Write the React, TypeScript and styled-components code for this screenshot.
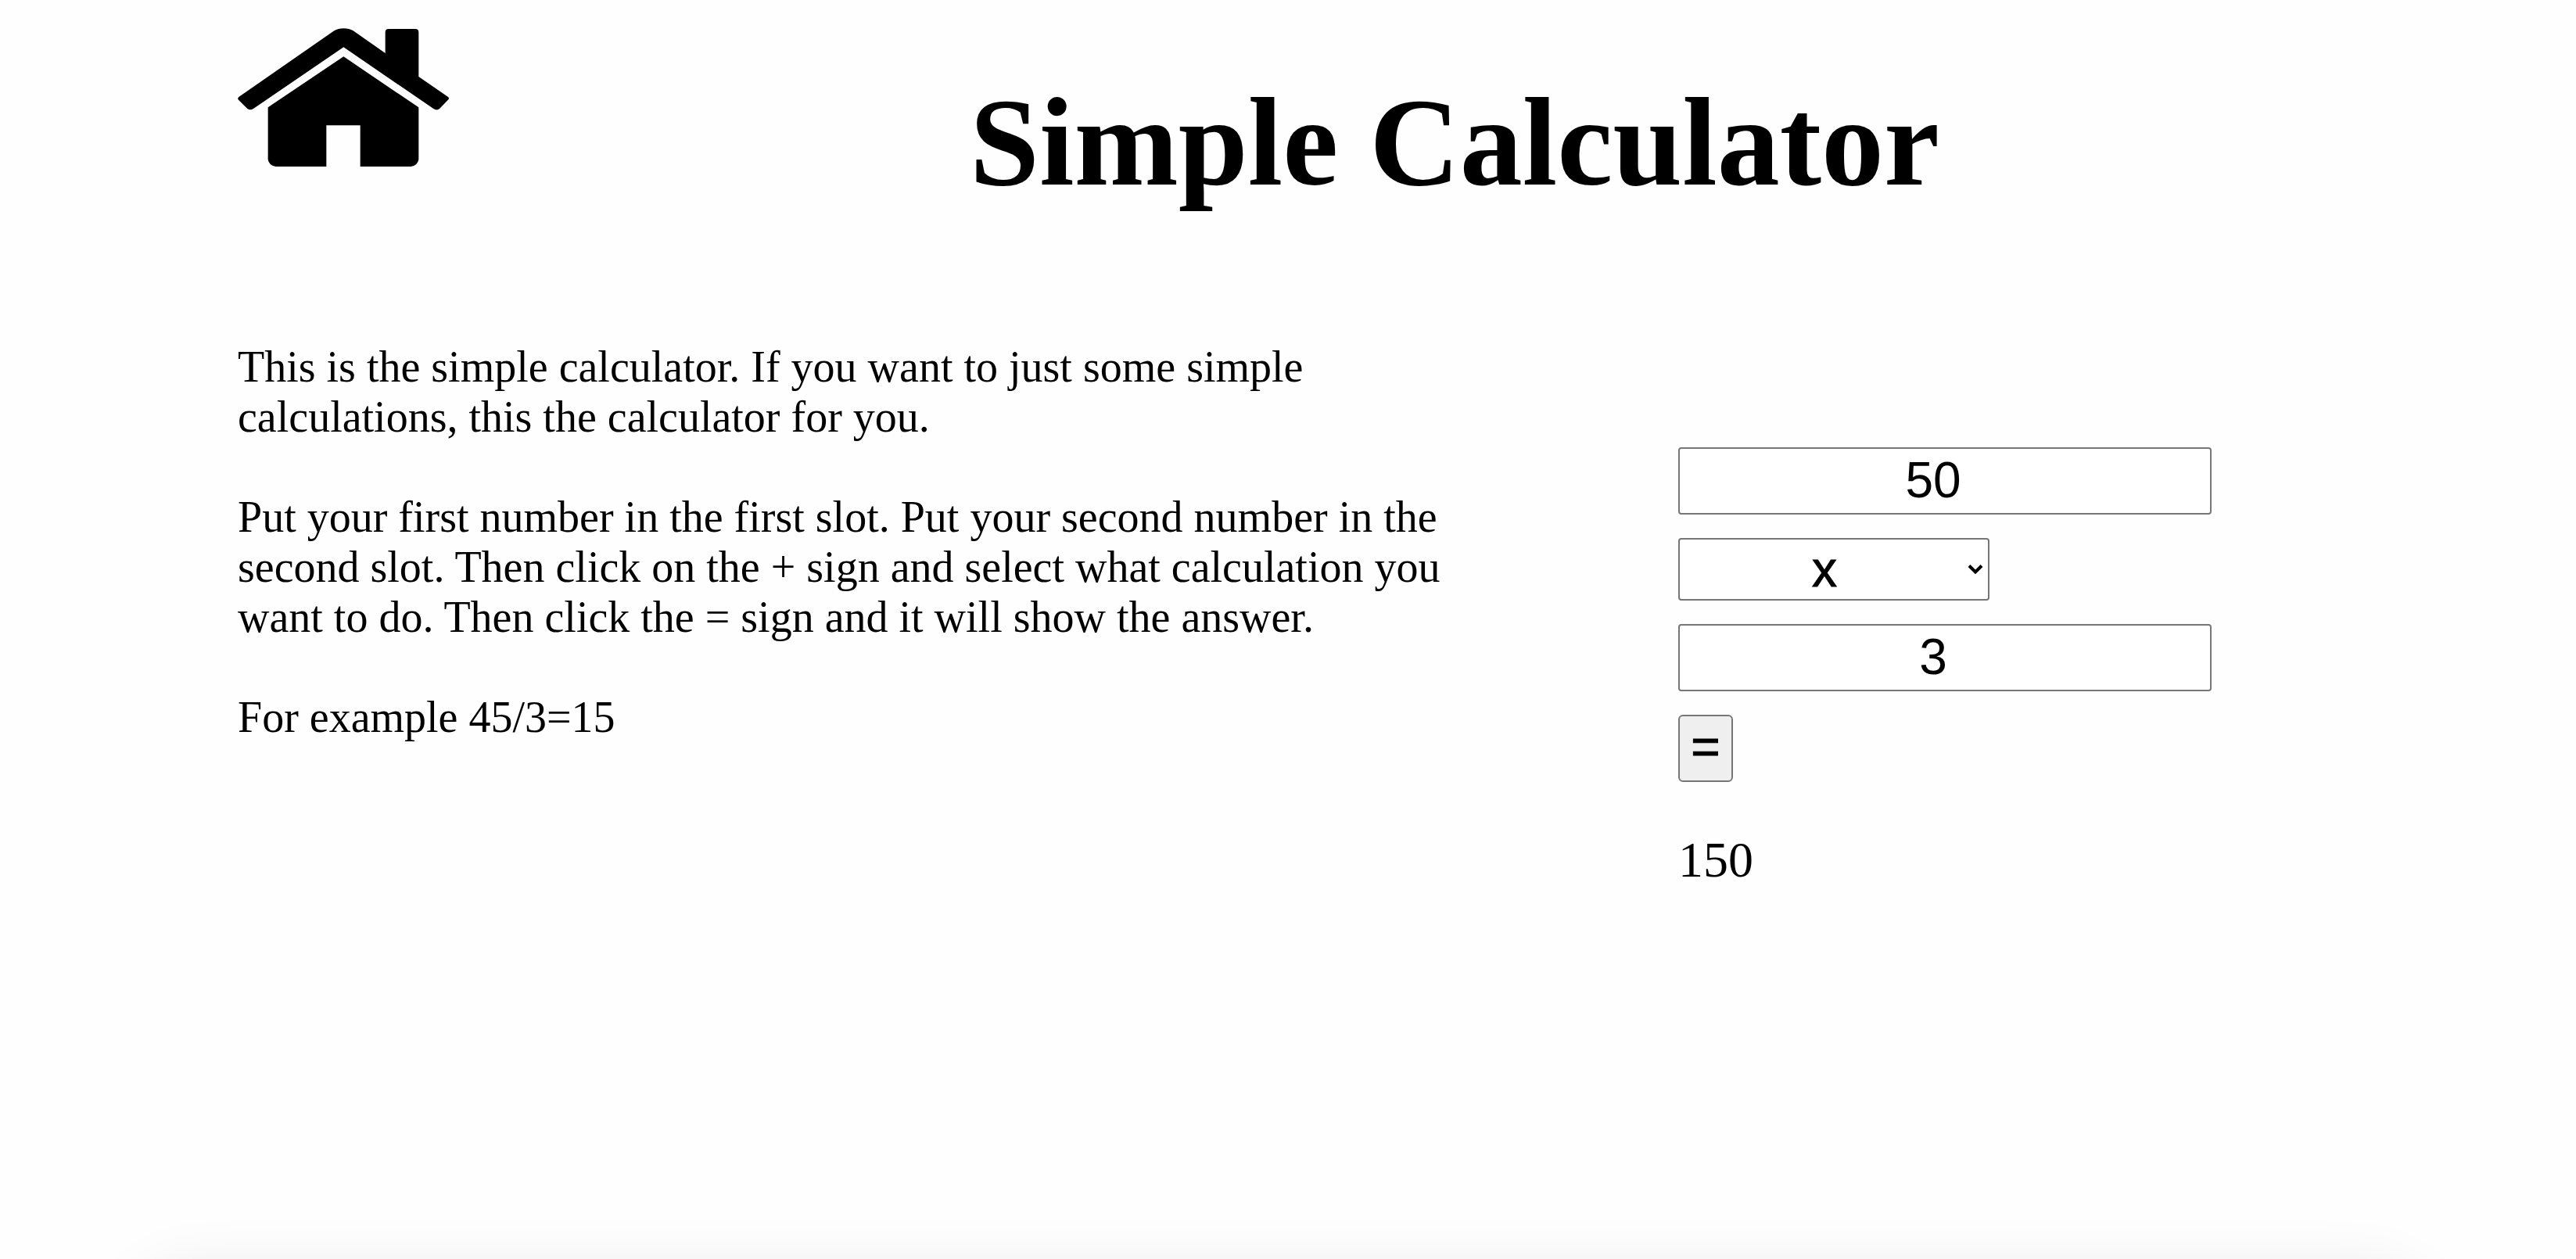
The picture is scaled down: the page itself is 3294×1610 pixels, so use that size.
import React, { useState } from "react";
import styled, { createGlobalStyle } from "styled-components";

const GlobalStyle = createGlobalStyle`
  *, *::before, *::after { box-sizing: border-box; }
  body {
    margin: 0;
    background: #fefefe;
    color: #000;
    font-family: "Liberation Serif", "Times New Roman", serif;
  }
`;

const Page = styled.div`
  padding: 36px 304px;
`;

const Header = styled.header`
  display: grid;
  grid-template-columns: 270px 1fr;
  column-gap: 156px;
  align-items: start;
`;

const HomeLink = styled.a`
  display: block;
  color: inherit;
`;

const HomeIcon = styled.svg`
  display: block;
  width: 100%;
  height: auto;
  fill: currentColor;
`;

const Title = styled.h1`
  margin: 0;
  padding-top: 54px;
  font-size: 160px;
  line-height: 184px;
  text-align: center;
`;

const Main = styled.main`
  display: grid;
  grid-template-columns: minmax(0, 1554fr) minmax(0, 844fr);
  column-gap: 288px;
  align-items: start;
  padding-top: 163px;
`;

const Instructions = styled.section`
  display: grid;
  gap: 64px;
  font-size: 56px;
  line-height: 64px;
`;

const Paragraph = styled.p`
  margin: 0;
`;

const Form = styled.form`
  display: grid;
  justify-items: start;
  gap: 30px;
  padding-top: 135px;
`;

const control = `
  margin: 0;
  border: 2px solid #767676;
  border-radius: 4px;
  background: #fff;
  color: #000;
  font-family: "Liberation Sans", Arial, sans-serif;
  font-size: 64px;
  line-height: 74px;
`;

const NumberInput = styled.input`
  ${control}
  width: 682px;
  max-width: 100%;
  height: 86px;
  padding: 2px 32px 4px 2px;
  text-align: center;
`;

const SelectBox = styled.div`
  position: relative;
  width: 398px;
`;

const Select = styled.select`
  ${control}
  display: block;
  appearance: none;
  width: 100%;
  height: 80px;
  padding: 0 24px 0 0;
  text-align: center;
  text-align-last: center;
  -webkit-text-stroke: 1px currentColor;
`;

const Chevron = styled.svg`
  position: absolute;
  top: 33px;
  right: 8px;
  width: 20px;
  height: 14px;
  fill: none;
  stroke: #000;
  stroke-width: 4;
  pointer-events: none;
`;

const EqualsButton = styled.button`
  ${control}
  width: 70px;
  height: 86px;
  padding: 0 0 4px;
  border-radius: 6px;
  background: #efefef;
  text-align: center;
  -webkit-text-stroke: 1px currentColor;
`;

const Result = styled.output`
  padding-top: 33px;
  font-size: 64px;
  line-height: 74px;
`;

/* Soft shadow rising from the bottom edge of the window */
const BottomShade = styled.div`
  position: fixed;
  top: 100%;
  left: 180px;
  right: 200px;
  height: 160px;
  border-radius: 60px;
  box-shadow: 0 20px 80px rgba(0, 0, 0, 0.1);
  pointer-events: none;
`;

type Operator = "+" | "-" | "x" | "/";

const operations: Record<Operator, (a: number, b: number) => number> = {
  "+": (a, b) => a + b,
  "-": (a, b) => a - b,
  x: (a, b) => a * b,
  "/": (a, b) => a / b,
};

export default function App() {
  const [first, setFirst] = useState("50");
  const [second, setSecond] = useState("3");
  const [operator, setOperator] = useState<Operator>("x");
  const [result, setResult] = useState(150);

  const calculate = (event: React.FormEvent) => {
    event.preventDefault();
    setResult(operations[operator](Number(first), Number(second)));
  };

  return (
    <>
      <GlobalStyle />
      <Page>
        <Header>
          <HomeLink href="#" aria-label="Home">
            <HomeIcon viewBox="72 48 810 532" aria-hidden="true">
              <path d="M442 58Q457 49 478 49Q500 49 515 58L638 144V64Q638 51 651 51H753Q766 51 766 64V234L878 311Q885 316 880 322L847 356Q836 366 823 357L478 121L132 357Q120 365 109 357L75 323Q69 317 77 311Z" />
              <path d="M478 157L766 352V552Q762 575 736 579H542V421H412V579H218Q192 575 188 552V352Z" />
            </HomeIcon>
          </HomeLink>
          <Title>Simple Calculator</Title>
        </Header>
        <Main>
          <Instructions>
            <Paragraph>
              This is the simple calculator. If you want to just some simple
              calculations, this the calculator for you.
            </Paragraph>
            <Paragraph>
              Put your first number in the first slot. Put your second number in
              the second slot. Then click on the + sign and select what
              calculation you want to do. Then click the = sign and it will show
              the answer.
            </Paragraph>
            <Paragraph>For example 45/3=15</Paragraph>
          </Instructions>
          <Form onSubmit={calculate}>
            <NumberInput
              aria-label="First number"
              inputMode="decimal"
              value={first}
              onChange={(e) => setFirst(e.target.value)}
            />
            <SelectBox>
              <Select
                aria-label="Calculation"
                value={operator}
                onChange={(e) => setOperator(e.target.value as Operator)}
              >
                {Object.keys(operations).map((name) => (
                  <option key={name} value={name}>
                    {name}
                  </option>
                ))}
              </Select>
              <Chevron viewBox="0 0 20 14" aria-hidden="true">
                <path d="M2 2.5L10 10.5L18 2.5" />
              </Chevron>
            </SelectBox>
            <NumberInput
              aria-label="Second number"
              inputMode="decimal"
              value={second}
              onChange={(e) => setSecond(e.target.value)}
            />
            <EqualsButton type="submit">=</EqualsButton>
            <Result>{result}</Result>
          </Form>
        </Main>
      </Page>
      <BottomShade />
    </>
  );
}
